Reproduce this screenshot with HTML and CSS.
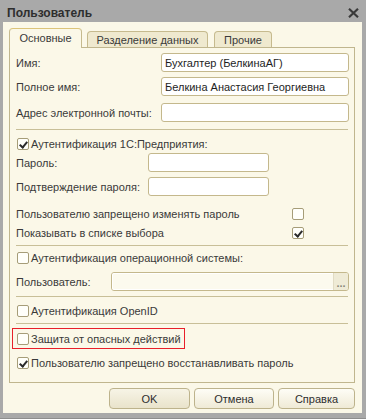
FILE: index.html
```html
<!DOCTYPE html>
<html lang="ru">
<head>
<meta charset="utf-8">
<title>Пользователь</title>
<link rel="stylesheet" href="styles.css">
</head>
<body>
<div class="window">
  <div class="titlebar">
    <span class="title">Пользователь</span>
    <svg class="close" width="11" height="10" viewBox="0 0 11 10"><path d="M1 0.8 L10 9.2 M10 0.8 L1 9.2" stroke="#3a3a3a" stroke-width="2.2" fill="none"/></svg>
  </div>
  <div class="content">
    <div class="tabs">
      <div class="tab active">Основные</div>
      <div class="tab t2">Разделение данных</div>
      <div class="tab t3">Прочие</div>
    </div>
    <div class="panel">
      <div class="row field wide r1"><span class="lbl">Имя:</span><div class="input"><span class="val">Бухгалтер (БелкинаАГ)</span></div></div>
      <div class="row field wide r2"><span class="lbl">Полное имя:</span><div class="input"><span class="val">Белкина Анастасия Георгиевна</span></div></div>
      <div class="row field wide r3"><span class="lbl">Адрес электронной почты:</span><div class="input"></div></div>
      <div class="sep s1"></div>
      <label class="row check r4"><span class="box on"></span><span class="ctext">Аутентификация 1С:Предприятия:</span></label>
      <div class="row field mid r5"><span class="lbl">Пароль:</span><div class="input"></div></div>
      <div class="row field mid r6"><span class="lbl">Подтверждение пароля:</span><div class="input"></div></div>
      <div class="row rcheck r7"><span class="lbl">Пользователю запрещено изменять пароль</span><span class="box"></span></div>
      <div class="row rcheck r8"><span class="lbl">Показывать в списке выбора</span><span class="box on"></span></div>
      <div class="sep s2"></div>
      <label class="row check r9"><span class="box"></span><span class="ctext">Аутентификация операционной системы:</span></label>
      <div class="row field narrow r10"><span class="lbl">Пользователь:</span><div class="input disabled"><span class="fill"></span><span class="dots">...</span></div></div>
      <div class="sep s3"></div>
      <label class="row check r11"><span class="box"></span><span class="ctext">Аутентификация OpenID</span></label>
      <div class="sep s4"></div>
      <div class="row r12"><label class="check marked"><span class="box"></span><span class="ctext">Защита от опасных действий</span></label></div>
      <label class="row check r13"><span class="box on"></span><span class="ctext">Пользователю запрещено восстанавливать пароль</span></label>
    </div>
    <div class="buttons">
      <div class="btn ok">OK</div>
      <div class="btn">Отмена</div>
      <div class="btn">Справка</div>
    </div>
  </div>
</div>
</body>
</html>
```
FILE: styles.css
```css
* { box-sizing: border-box; }
html, body { margin: 0; padding: 0; }
body {
  width: 366px; height: 419px; overflow: hidden;
  font-family: "Liberation Sans", Arial, sans-serif;
  font-size: 11px; color: #3a3a3a; white-space: nowrap;
}
.window {
  width: 366px; height: 419px;
  background: #a9a9a9;
  padding: 0 4px 5px 3px;
  display: flex; flex-direction: column;
  border-bottom: 1px solid #8e8e8e;
}
.titlebar {
  height: 22px; flex: none;
  display: flex; align-items: center; justify-content: space-between;
  padding: 0 3px 0 4px;
}
.title { font-weight: bold; font-size: 12px; color: #2e2e2e; padding-top: 4px; }
.close { margin-top: 3px; }
.content {
  flex: 1; background: #fbf8e8;
  padding: 6px 7px 0 6px;
  display: flex; flex-direction: column;
}
.tabs { display: flex; align-items: flex-end; height: 19px; gap: 5px; position: relative; z-index: 1; }
.tab {
  height: 16px; border: 1px solid #c6ba8e; border-bottom: none;
  border-radius: 4px 4px 0 0; background: #efe9cf;
  display: flex; align-items: center; justify-content: center;
  color: #3a3a3a; padding-top: 1px;
}
.tab.active { height: 20px; margin-bottom: -1px; background: #fbf8e8; border-top-color: #dcc47a; width: 73px; padding-top: 0; padding-bottom: 1px; }
.tab.t2 { width: 121px; }
.tab.t3 { width: 58px; margin-left: 1px; }
.panel {
  border: 1px solid #c0b68e;
  padding: 5px 6px 0 6px;
  height: 336px;
  display: flex; flex-direction: column;
}
.row { display: flex; align-items: center; flex: none; }
.field { height: 19px; }
.field .lbl { flex: none; padding-top: 1px; }
.wide .lbl { width: 145px; }
.mid .lbl { width: 132px; }
.narrow .lbl { width: 95px; }
.input {
  height: 19px; border: 1px solid #c4b88c; border-radius: 3px;
  background: #fff; flex: none; display: flex; align-items: center;
  padding-left: 3px; color: #1e1e1e;
}
.wide .input { width: 188px; }
.mid .input { width: 121px; }
.narrow .input { width: 238px; padding: 0; overflow: hidden; }
.input.disabled { background: #fcfaee; }
.input .fill { flex: 1; height: 100%; border: 1px solid #fff; border-right: none; border-radius: 2px 0 0 2px; }
.input .dots {
  width: 15px; height: 100%; background: #efebd6; border-left: 1px solid #e2dcc4;
  color: #8a8a7a; font-size: 11px; font-weight: bold; letter-spacing: 0;
  display: flex; align-items: center; justify-content: center; padding-top: 3px;
}
.r2 { margin-top: 5px; }
.r3 { margin-top: 7px; }
.sep { height: 1px; background: #c8bf98; flex: none; }
.s1 { margin-top: 7px; }
.check { height: 15px; display: flex; align-items: center; }
.box {
  width: 12px; height: 12px; flex: none;
  border: 1px solid #a69d78; border-radius: 2px; background: #fffffa;
  position: relative;
}
.box.on::after {
  content: ""; position: absolute; left: 3px; top: 1px;
  width: 3px; height: 6px; border: solid #2a2a2a; border-width: 0 2px 2px 0;
  transform: rotate(40deg);
}
.check .box { margin-left: 1px; }
.ctext { margin-left: 2px; }
.r4 { margin-top: 6px; }
.r5 { margin-top: 2px; }
.r6 { margin-top: 5px; }
.rcheck { height: 15px; }
.rcheck .lbl { width: 276px; flex: none; }
.r7 { margin-top: 10px; }
.r8 { margin-top: 4px; }
.s2 { margin-top: 5px; }
.r9 { margin-top: 4px; }
.r10 { margin-top: 7px; }
.s3 { margin-top: 5px; }
.r11 { margin-top: 6px; }
.s4 { margin-top: 5px; }
.r12 { margin-top: 4px; height: 21px; }
.marked {
  height: 21px; border: 1px solid #e8202a; margin-left: -4px;
  padding: 0 3px 0 3px;
}
.r13 { margin-top: 6px; }
.buttons {
  display: flex; justify-content: flex-end; gap: 4px;
  margin-top: 5px;
}
.btn {
  height: 21px; width: 80px;
  border: 1px solid #bdb38c; border-radius: 4px;
  background: linear-gradient(#fefdf6, #efead6);
  display: flex; align-items: center; justify-content: center;
  color: #2e2e2e;
}
.btn.ok { width: 81px; background: linear-gradient(#f7f4e6, #e9e3cb); }
.btn:last-child { width: 77px; }
```
